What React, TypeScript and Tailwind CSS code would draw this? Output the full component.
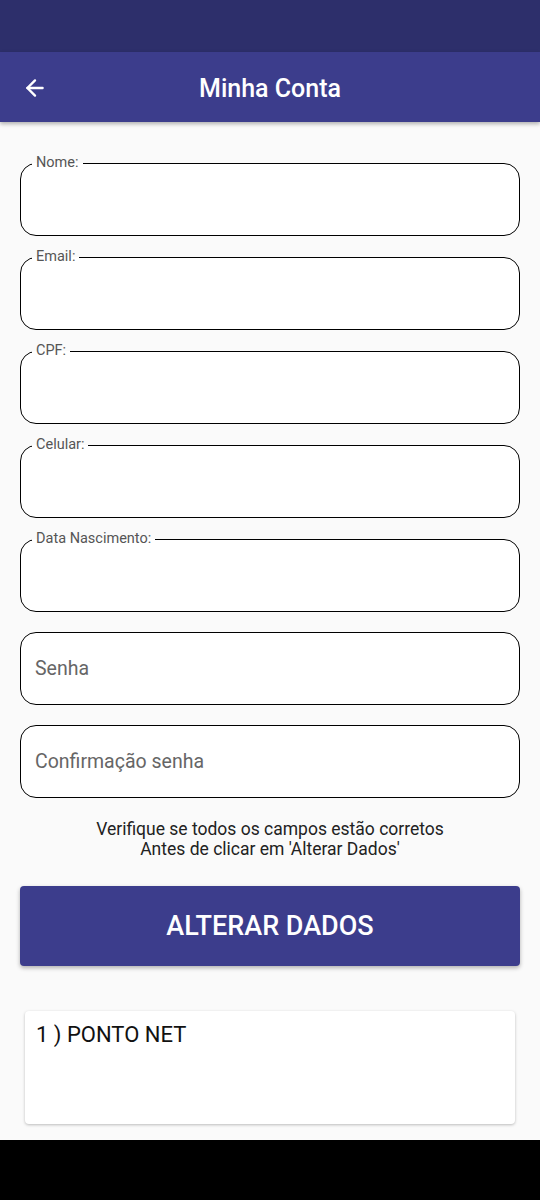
import { ArrowLeft } from "lucide-react";

const fields = [
  { label: "Nome:" },
  { label: "Email:" },
  { label: "CPF:" },
  { label: "Celular:" },
  { label: "Data Nascimento:" },
  { placeholder: "Senha" },
  { placeholder: "Confirmação senha" },
];

function Field({ label, placeholder }: { label?: string; placeholder?: string }) {
  if (label) {
    return (
      <fieldset className="border-[1.5px] border-black rounded-2xl bg-white px-[11px] m-0">
        <legend className="px-1 text-[14.5px] leading-4 text-[#555]">{label}</legend>
        <div className="h-[64px]" />
      </fieldset>
    );
  }
  return (
    <div className="mt-[7px] h-[73px] border-[1.5px] border-black rounded-2xl bg-white px-[14px] flex items-center">
      <span className="text-[19.5px] text-[#666]">{placeholder}</span>
    </div>
  );
}

export default function App() {
  return (
    <div className="w-[540px] h-[1200px] flex flex-col bg-[#fafafa] font-['Roboto',sans-serif]">
      <div className="h-[52px] bg-[#2d2f6b]" />
      <header className="h-[70px] bg-[#3c3d8c] flex items-center relative shadow-[0_2px_4px_rgba(0,0,0,0.3)] z-10">
        <ArrowLeft className="absolute left-[22px] top-[23px] text-white" size={26} strokeWidth={2.2} />
        <h1 className="w-full pt-[3px] text-center text-white text-[25px] font-medium">Minha Conta</h1>
      </header>
      <main className="flex-1 px-5 pt-[33px]">
        <div className="flex flex-col gap-[13px]">
          {fields.map((f, i) => (
            <Field key={i} {...f} />
          ))}
        </div>
        <p className="mt-[21px] text-center text-[17.5px] leading-5 text-[#222]">
          Verifique se todos os campos estão corretos
          <br />
          Antes de clicar em 'Alterar Dados'
        </p>
        <button className="mt-[27px] w-full h-[80px] rounded bg-[#3c3d8c] text-white text-[27px] font-medium shadow-[0_2px_4px_rgba(0,0,0,0.3)]">
          ALTERAR DADOS
        </button>
        <div className="mt-[45px] mx-[5px] h-[113px] bg-white rounded shadow-[0_1px_3px_rgba(0,0,0,0.25)] px-[11px] pt-[10px]">
          <div className="text-[22px] leading-7 text-[#111]">1 ) PONTO NET</div>
        </div>
      </main>
      <div className="h-[60px] bg-black" />
    </div>
  );
}
